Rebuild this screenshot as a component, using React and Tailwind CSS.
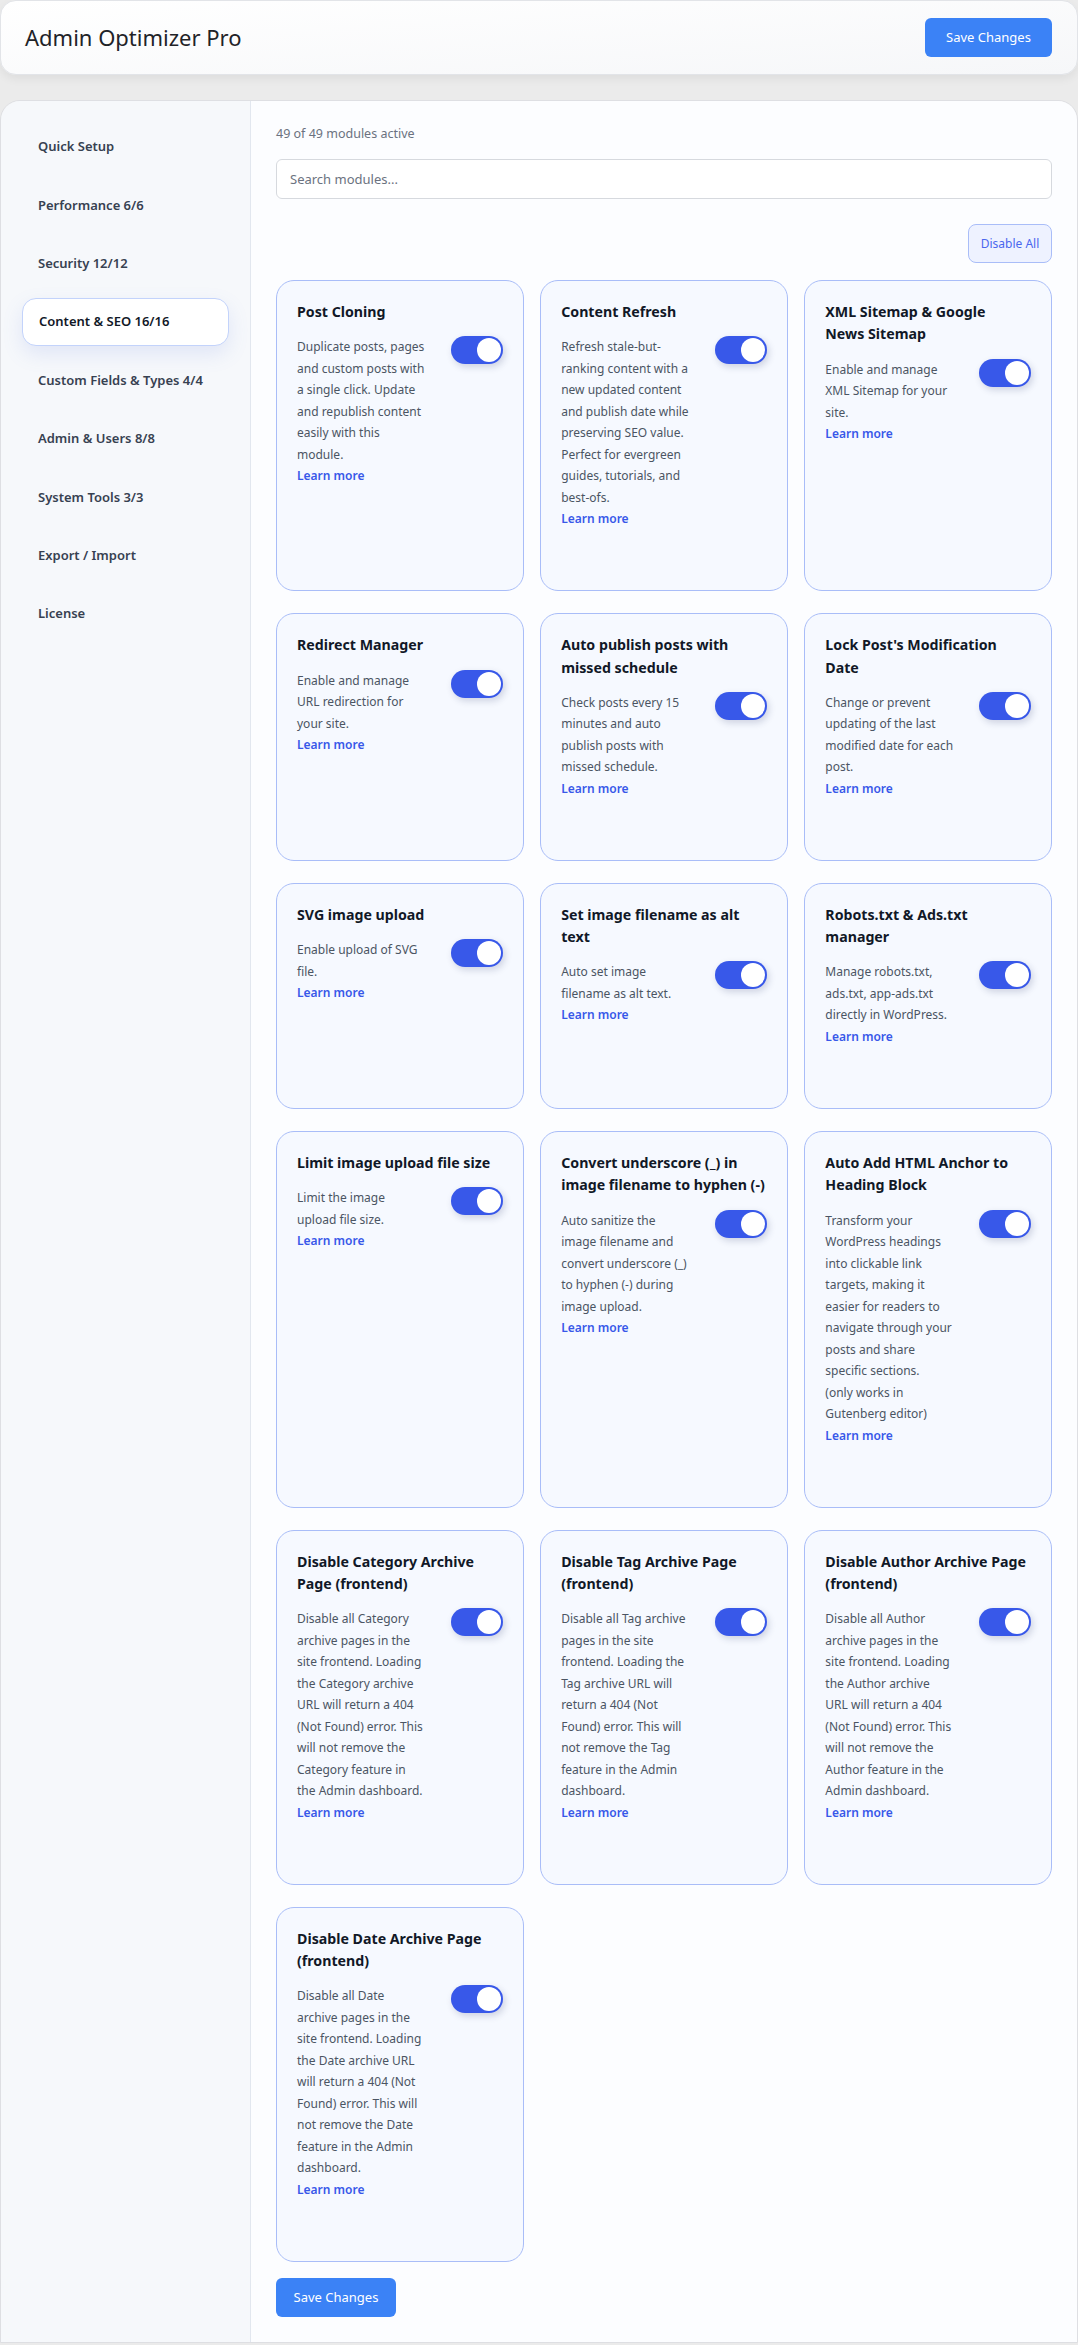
import { useState } from 'react';

const sections = [
  { label: 'Quick Setup' },
  { label: 'Performance 6/6' },
  { label: 'Security 12/12' },
  { label: 'Content & SEO 16/16', active: true },
  { label: 'Custom Fields & Types 4/4' },
  { label: 'Admin & Users 8/8' },
  { label: 'System Tools 3/3' },
  { label: 'Export / Import' },
  { label: 'License' },
];

const modules = [
  { title: 'Post Cloning', desc: ['Duplicate posts, pages and custom posts with a single click. Update and republish content easily with this module.'] },
  { title: 'Content Refresh', desc: ['Refresh stale-but-ranking content with a new updated content and publish date while preserving SEO value. Perfect for evergreen guides, tutorials, and best-ofs.'] },
  { title: 'XML Sitemap & Google\nNews Sitemap', desc: ['Enable and manage XML Sitemap for your site.'] },
  { title: 'Redirect Manager', desc: ['Enable and manage URL redirection for your site.'] },
  { title: 'Auto publish posts with missed schedule', desc: ['Check posts every 15 minutes and auto publish posts with missed schedule.'] },
  { title: "Lock Post's Modification Date", desc: ['Change or prevent updating of the last modified date for each post.'] },
  { title: 'SVG image upload', desc: ['Enable upload of SVG file.'] },
  { title: 'Set image filename as alt text', desc: ['Auto set image filename as alt text.'] },
  { title: 'Robots.txt & Ads.txt manager', desc: ['Manage robots.txt, ads.txt, app-ads.txt directly in WordPress.'] },
  { title: 'Limit image upload file size', desc: ['Limit the image upload file size.'] },
  { title: 'Convert underscore (_) in image filename to hyphen (-)', desc: ['Auto sanitize the image filename and convert underscore (_) to hyphen (-) during image upload.'] },
  { title: 'Auto Add HTML Anchor to Heading Block', desc: ['Transform your WordPress headings into clickable link targets, making it easier for readers to navigate through your posts and share specific sections.', '(only works in Gutenberg editor)'] },
  { title: 'Disable Category Archive Page (frontend)', desc: ['Disable all Category archive pages in the site frontend. Loading the Category archive URL will return a 404 (Not Found) error. This will not remove the Category feature in the Admin dashboard.'] },
  { title: 'Disable Tag Archive Page (frontend)', desc: ['Disable all Tag archive pages in the site frontend. Loading the Tag archive URL will return a 404 (Not Found) error. This will not remove the Tag feature in the Admin dashboard.'] },
  { title: 'Disable Author Archive Page (frontend)', desc: ['Disable all Author archive pages in the site frontend. Loading the Author archive URL will return a 404 (Not Found) error. This will not remove the Author feature in the Admin dashboard.'] },
  { title: 'Disable Date Archive Page (frontend)', desc: ['Disable all Date archive pages in the site frontend. Loading the Date archive URL will return a 404 (Not Found) error. This will not remove the Date feature in the Admin dashboard.'] },
];

function Toggle({ on, onChange }) {
  return (
    <button
      onClick={onChange}
      className={`relative shrink-0 w-[52px] h-[28px] rounded-full shadow-[2px_3px_7px_rgba(30,41,90,0.18)] ${on ? 'bg-[#3858e9]' : 'bg-gray-300'}`}
    >
      <span className={`absolute top-[2px] w-[24px] h-[24px] rounded-full bg-white ${on ? 'right-[2px]' : 'left-[2px]'}`} />
    </button>
  );
}

function ModuleCard({ title, desc, on, onToggle }) {
  return (
    <div className="rounded-[18px] border border-[#a9bdf8] bg-[#f6f9ff] pt-5 px-5 pb-[60.5px]">
      <h3 className="whitespace-pre-line text-[14.2px] leading-[22.3px] font-bold text-[#111827] mb-[13px]">{title}</h3>
      <div className="flex items-start gap-[24px]">
        <div className="flex-1 text-[12px] leading-[21.5px] text-[#4b5563]">
          {desc.map((d, i) => (
            <p key={i}>{d}</p>
          ))}
          <a href="#" className="block font-semibold text-[#3858e9]">Learn more</a>
        </div>
        <Toggle on={on} onChange={onToggle} />
      </div>
    </div>
  );
}

export default function App() {
  const [active, setActive] = useState(modules.map(() => true));

  const flip = (i) => setActive(prev => prev.map((v, j) => (j === i ? !v : v)));

  return (
    <div className="min-h-screen bg-[#ebebeb]" style={{ fontFamily: '"Noto Sans", "Open Sans", sans-serif' }}>
      {/* Top bar */}
      <header className="h-[75px] rounded-2xl border border-[#e2e4e8] bg-gradient-to-br from-white to-[#f6f7f9] shadow-[0_4px_10px_rgba(0,0,0,0.06)] flex items-center justify-between pl-6 pr-[25px]">
        <h1 className="text-[22px] text-[#1f2328]">Admin Optimizer Pro</h1>
        <button className="w-[127px] h-[39px] rounded-md bg-[#3b82f6] text-white text-[13px]">Save Changes</button>
      </header>

      {/* Main panel */}
      <div className="mt-[25px] flex rounded-t-[20px] border border-[#dedfe3] overflow-hidden">
        <aside className="w-[250px] shrink-0 bg-[#f6f8fb] border-r border-[#e2e7ef] px-[21px] pt-[22px] flex flex-col gap-[10.4px]">
          {sections.map(({ label, active: isActive }) => (
            <div
              key={label}
              className={`h-[48px] flex items-center px-4 rounded-[14px] text-[13px] font-semibold ${isActive ? 'bg-white border border-[#c3d3fb] text-[#111827] shadow-[0_8px_20px_rgba(99,125,220,0.15)]' : 'text-[#374151]'}`}
            >
              {label}
            </div>
          ))}
        </aside>

        <main className="flex-1 bg-[#fcfdff] px-[25px] pt-[24px] pb-[25px]">
          <p className="text-[12.5px] leading-[18px] text-[#6b7280]">49 of 49 modules active</p>
          <input
            type="text"
            placeholder="Search modules..."
            className="mt-4 w-full h-[40px] rounded-md border border-[#d6d9de] bg-white px-[13px] text-[13px] text-gray-700 placeholder:text-[#6b7280] outline-none"
          />
          <div className="mt-[25px] flex justify-end">
            <button className="w-[84px] h-[39px] rounded-lg border border-[#a9bdf8] bg-[#eef2ff] text-[12px] text-[#4a67ee]">Disable All</button>
          </div>

          <div className="mt-[17px] grid grid-cols-3 gap-x-[16.5px] gap-y-[22px]">
            {modules.map((m, i) => (
              <ModuleCard key={m.title} {...m} on={active[i]} onToggle={() => flip(i)} />
            ))}
          </div>

          <button className="mt-4 w-[120px] h-[39px] rounded-md bg-[#3b82f6] text-white text-[13px]">Save Changes</button>
        </main>
      </div>
    </div>
  );
}
